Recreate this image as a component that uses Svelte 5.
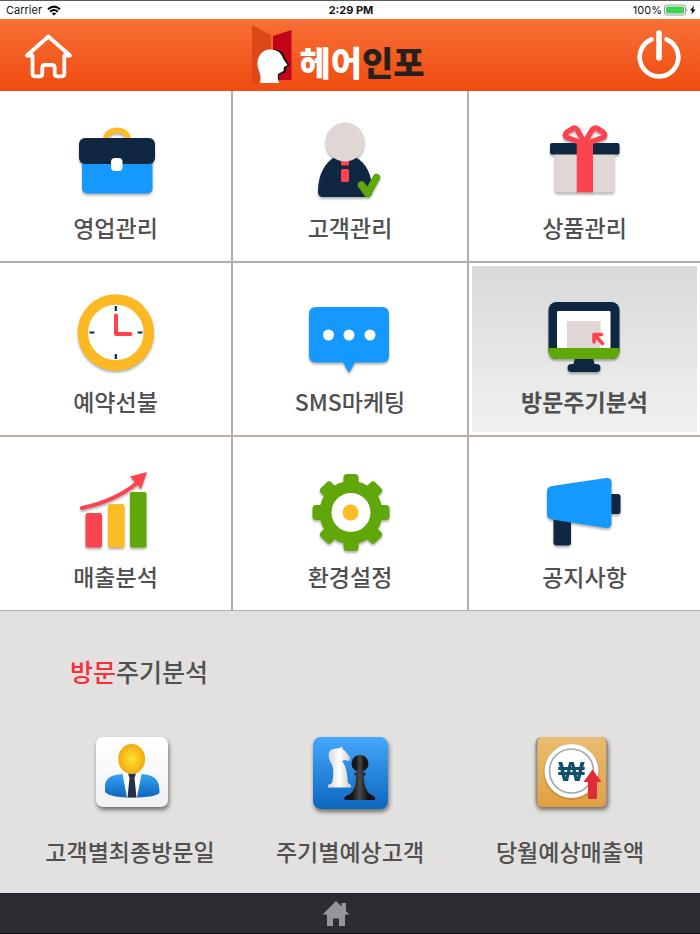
<script>
	let menus = [
		{ id: 'sales', label: '영업관리', box: '65 118 101 88' },
		{ id: 'customer', label: '고객관리', box: '300 118 101 88' },
		{ id: 'product', label: '상품관리', box: '534 118 101 88' },
		{ id: 'booking', label: '예약선불', box: '65 292 101 88' },
		{ id: 'sms', label: 'SMS마케팅', box: '300 292 101 88' },
		{ id: 'visit', label: '방문주기분석', box: '534 292 101 88' },
		{ id: 'revenue', label: '매출분석', box: '65 467 101 88' },
		{ id: 'settings', label: '환경설정', box: '300 467 101 88' },
		{ id: 'notice', label: '공지사항', box: '534 467 101 88' }
	];

	let subs = [
		{ id: 'last', label: '고객별최종방문일', box: '85 731 90 90' },
		{ id: 'cycle', label: '주기별예상고객', box: '305 731 90 90' },
		{ id: 'month', label: '당월예상매출액', box: '525 731 90 90' }
	];

	let selected = 'visit';
	const teeth = [0, 45, 90, 135, 180, 225, 270, 315];
</script>

<div class="page">
	<div class="status">
		<div class="carrier">
			<span>Carrier</span>
			<svg width="14" height="11" viewBox="0 0 14 11" fill="none" stroke="#000" stroke-width="2">
				<path d="M1 4.2Q7 -1 13 4.2M3.2 6.7Q7 3.4 10.8 6.7" />
				<path d="M7 10.6L4.8 8.4Q7 6.8 9.2 8.4Z" fill="#000" stroke="none" />
			</svg>
		</div>
		<b>2:29 PM</b>
		<div class="battery">
			<span>100%</span>
			<svg width="32" height="12" viewBox="0 0 32 12">
				<rect x="0.5" y="1" width="21" height="10" rx="2" fill="#fff" stroke="#999" />
				<rect x="2" y="2.5" width="18" height="7" rx="1" fill="#41d251" />
				<path d="M22.5 4.5Q24.5 6 22.5 7.5Z" fill="#999" />
				<path d="M30 1.5L26 6.5H28.2L27.4 10.5L31.5 5.5H29.2Z" fill="#000" />
			</svg>
		</div>
	</div>

	<header>
		<button class="icon-btn" aria-label="홈">
			<svg width="62" height="60" viewBox="12 25 62 60" fill="none" stroke="#fff" stroke-width="3.8" stroke-linejoin="round">
				<path d="M48.3 36.5L27 55.5H32.5V73.5Q32.5 76.3 35 76.3H39.5Q42.3 76.3 42.3 73.5V68Q42.3 65 45 65H52Q54.7 65 54.7 68V73.5Q54.7 76.3 57.3 76.3H61.5Q64.3 76.3 64.3 73.5V55.5H70Z" />
			</svg>
		</button>
		<div class="logo">
			<svg width="42" height="62" viewBox="251 24 42 62">
				<path d="M252 25L271 35V50L258 84L252 83Z" fill="#dc4817" />
				<path d="M273 36L291.5 30V80H273Z" fill="#c10519" />
				<path d="M273 49.5C281 50 284 53 285 58L289.5 65L286 68V72L279 75V81H274Z" fill="#160d0d" />
				<path d="M260 83C262 76 259 72 257.8 67C256 57 262 49.5 270 49.5C278 49.5 282 54 283 58.5L287.5 65L284 67L283.5 71L278 74Q277 78 279 83Z" fill="#fff" />
			</svg>
			<span class="brand">헤어<em>인포</em></span>
		</div>
		<button class="icon-btn" aria-label="종료">
			<svg width="62" height="60" viewBox="626 25 62 60" fill="none" stroke="#fff" stroke-width="4.6" stroke-linecap="round">
				<path d="M651.5 39.3A19.3 19.3 0 1 0 666.5 39.3" />
				<path d="M659 33V58" stroke-width="5.6" />
			</svg>
		</button>
	</header>

	<nav class="menu">
		{#each menus as menu}
			<button class="cell" class:active={menu.id === selected} on:click={() => (selected = menu.id)}>
				<svg class="icon" width="101" height="88" viewBox={menu.box}>
					{#if menu.id === 'sales'}
						<path d="M106 140C105 127 129 127 128 140" fill="none" stroke="#fdbb24" stroke-width="5.5" />
						<rect x="82" y="155" width="70.5" height="38.5" rx="5" fill="#1599fe" />
						<rect x="79" y="138" width="76" height="26" rx="6" fill="#0f2740" />
						<rect x="111" y="158" width="11.5" height="13" rx="4" fill="#fff" />
					{:else if menu.id === 'customer'}
						<path d="M318 191C318 175 325 162 335 157H355C366 162 372 175 372 190V192Q372 197 367 197H323Q318 197 318 192Z" fill="#0f2740" />
						<rect x="341" y="158" width="8" height="7.5" rx="1" fill="#fc4450" />
						<rect x="341" y="169" width="8" height="13" rx="1.5" fill="#fc4450" />
						<circle cx="345" cy="142" r="19.5" fill="#e0d7d5" />
						<path d="M361.5 185L367.7 193.5L376.5 177.5" fill="none" stroke="#60a80a" stroke-width="7.5" stroke-linecap="round" stroke-linejoin="round" />
					{:else if menu.id === 'product'}
						<rect x="554.5" y="150" width="60" height="42.5" rx="3" fill="#e0d7d5" />
						<rect x="550" y="143" width="69.5" height="11.5" rx="2" fill="#0f2740" />
						<path d="M576.7 192.5V143L585 138L593 143V192.5Z" fill="#fc4450" />
						<path d="M582 143L567 137.5Q563.5 135 567 132L572 129Q575 127 577.5 130L584.5 143L592 130Q594.5 127 598 129L603 132Q606.5 135 603 137.5L588 143" fill="none" stroke="#fc4450" stroke-width="5.5" stroke-linejoin="round" />
					{:else if menu.id === 'booking'}
						<circle cx="115.8" cy="332.5" r="33" fill="#fff" stroke="#fdb924" stroke-width="10.5" />
						<path d="M115.8 306V311M115.8 354V359M89.5 332.5H94.5M137.5 332.5H142.5" stroke="#0f2740" stroke-width="2.2" />
						<path d="M116 315.5V334H130.5" fill="none" stroke="#fc4450" stroke-width="4" stroke-linecap="round" stroke-linejoin="round" />
					{:else if menu.id === 'sms'}
						<path d="M316 307H382Q389 307 389 314V355.5Q389 362.5 382 362.5H355L350 371.5Q349 372.5 348 371.5L343 362.5H316Q309 362.5 309 355.5V314Q309 307 316 307Z" fill="#1599fe" />
						<circle cx="328.5" cy="335" r="5.5" fill="#fff" />
						<circle cx="349" cy="335" r="5.5" fill="#fff" />
						<circle cx="370" cy="335" r="5.5" fill="#fff" />
					{:else if menu.id === 'visit'}
						<path d="M575 358H593L595 366H573Z" fill="#0f2740" />
						<rect x="567.5" y="364" width="33" height="8" rx="4" fill="#0f2740" />
						<rect x="548.5" y="302" width="71" height="57" rx="8" fill="#0f2740" />
						<path d="M548.5 348H619.5V351Q619.5 359 611.5 359H556.5Q548.5 359 548.5 351Z" fill="#60a80a" />
						<rect x="557" y="311" width="53.5" height="37" rx="1" fill="#fff" />
						<rect x="567" y="321" width="33.7" height="27" fill="#e0d7d5" />
						<path d="M594 342V334.5H601.500M595 335.500L602.500 343.500" fill="none" stroke="#fc4450" stroke-width="3.6" stroke-linecap="round" stroke-linejoin="round" />
					{:else if menu.id === 'revenue'}
						<rect x="85.5" y="513" width="16.5" height="34.5" rx="2" fill="#fc4450" />
						<rect x="108" y="504" width="16.5" height="43.5" rx="2" fill="#fdbb24" />
						<rect x="130" y="492" width="16.5" height="55.5" rx="2" fill="#60a80a" />
						<path d="M82 508Q115 501 137 483" fill="none" stroke="#fc4450" stroke-width="4" stroke-linecap="round" />
						<path d="M147 472L130 476.5L141 489Z" fill="#fc4450" />
					{:else if menu.id === 'settings'}
						{#each teeth as angle}
							<rect x="343.5" y="474" width="15" height="14" rx="3.5" fill="#60a80a" transform="rotate({angle} 351 512.5)" />
						{/each}
						<circle cx="351" cy="512.5" r="25.5" fill="#fff" stroke="#60a80a" stroke-width="12" />
						<circle cx="350.5" cy="512.5" r="8" fill="#fdbb24" />
					{:else}
						<rect x="553.5" y="512" width="17.5" height="33.5" rx="3" fill="#0f2740" />
						<rect x="607" y="494" width="13.5" height="20" rx="2.5" fill="#0f2740" />
						<path d="M552 486L606 478Q611.5 477.5 611.5 482V523Q611.5 528.5 606 528L552 519.5Q547 518.5 547 514V491Q547 487 552 486Z" fill="#1599fe" />
					{/if}
				</svg>
				<span class="label">{menu.label}</span>
			</button>
		{/each}
	</nav>

	<section>
		<h2><em>방문</em>주기분석</h2>
		<div class="subs">
			{#each subs as sub}
				<button class="sub">
					<svg class="tile" width="90" height="90" viewBox={sub.box}>
						{#if sub.id === 'last'}
							<defs>
								<linearGradient id="paper" x2="0" y2="1"><stop stop-color="#fff" /><stop offset="1" stop-color="#f1f1f4" /></linearGradient>
								<linearGradient id="suit" x2="0" y2="1"><stop stop-color="#39a2f4" /><stop offset="1" stop-color="#0b67bd" /></linearGradient>
								<radialGradient id="face"><stop stop-color="#ffe32e" /><stop offset="1" stop-color="#f3ab10" /></radialGradient>
							</defs>
							<rect x="96" y="737" width="72" height="70" rx="7" fill="url(#paper)" />
							<path d="M105 790C104 778 110 775 123 774H141C153 775 160 778 159.5 793Q155 797.5 132 797.5Q110 797.5 105 792Z" fill="url(#suit)" />
							<path d="M122.5 774L127 797.5H137L141.5 774Z" fill="#fff" />
							<path d="M128 773.5H136L134.5 778L136.5 797.5H127.5L129.5 778Z" fill="#253148" />
							<ellipse cx="131.7" cy="759" rx="13.5" ry="15" fill="url(#face)" />
						{:else if sub.id === 'cycle'}
							<defs>
								<linearGradient id="board" x2="0" y2="1"><stop stop-color="#45a8fb" /><stop offset="1" stop-color="#0c66bf" /></linearGradient>
								<linearGradient id="knight"><stop stop-color="#d5d5d5" /><stop offset=".5" stop-color="#fff" /><stop offset="1" stop-color="#c9c9c9" /></linearGradient>
								<linearGradient id="pawn"><stop offset=".25" stop-color="#151515" /><stop offset=".5" stop-color="#494949" /><stop offset=".75" stop-color="#151515" /></linearGradient>
							</defs>
							<rect x="313" y="737" width="75" height="72" rx="8" fill="url(#board)" />
							<path d="M333 749L340 748L341.5 746.5L343 749.5C346 751 348 755 350.5 758L349 761L345 760L342 761C347 767 347 775 348 783L351 785V787.5H328V785L332 783C334 774 334 767 330.5 762C327.5 756 328 750 333 749Z" fill="url(#knight)" />
							<circle cx="360" cy="763.5" r="8.5" fill="url(#pawn)" />
							<path d="M357 770H363V772.5H365.5V775.5H364C364 785 366 791 370 794L375 797V800H344.5V797L350 794C354 791 356 785 356 775.5H354.5V772.5H357Z" fill="url(#pawn)" />
						{:else}
							<defs>
								<linearGradient id="gold" x2="0" y2="1"><stop stop-color="#e9bd73" /><stop offset="1" stop-color="#e0a042" /></linearGradient>
							</defs>
							<rect x="535.5" y="737" width="72" height="70" rx="6" fill="#96908a" />
							<rect x="537.5" y="737" width="68.5" height="70" rx="5" fill="url(#gold)" />
							<circle cx="571.5" cy="772" r="28" fill="#ad7a2d" opacity=".5" />
							<circle cx="571.5" cy="771" r="27" fill="#fff" />
							<circle cx="571.5" cy="771" r="22" fill="none" stroke="#a8a9ac" stroke-width="1.7" />
							<text class="won" x="571.5" y="781" text-anchor="middle">₩</text>
							<path d="M592.5 769.5L601.5 782H597V797.5Q597 799 595.5 799H589.5Q588 799 588 797.5V782H583.5Z" fill="#de2c38" />
						{/if}
					</svg>
					<span class="label">{sub.label}</span>
				</button>
			{/each}
		</div>
	</section>

	<footer>
		<button class="icon-btn" aria-label="메인으로">
			<svg width="28" height="28" viewBox="322 898 28 28" fill="#96969a">
				<path d="M336 899L341.5 904.5V901H346V909L349.5 912.5H345V924H339V916.5H333V924H327V912.5H322.5Z" />
			</svg>
		</button>
	</footer>
</div>

<style>
	:global(body) {
		background: #e2e1df;
	}

	.page {
		min-height: 100vh;
		display: flex;
		flex-direction: column;
		font-family: "Noto Sans CJK KR", "Noto Sans", sans-serif;
		color: #505050;
	}

	button {
		margin: 0;
		padding: 0;
		border: 0;
		background: none;
		font: inherit;
		color: inherit;
		cursor: pointer;
	}

	svg {
		display: block;
	}

	em {
		font-style: normal;
	}

	.status {
		display: grid;
		grid-template-columns: 1fr auto 1fr;
		align-items: center;
		box-sizing: border-box;
		height: 19px;
		padding: 0 4px 0 6px;
		border-top: 1px solid #5a5a5a;
		background: #fff;
		color: #111;
		font-family: Inter, "Liberation Sans", sans-serif;
		font-size: 11px;
	}

	.carrier, .battery {
		display: flex;
		align-items: center;
		gap: 5px;
	}

	.battery {
		justify-content: flex-end;
		gap: 2px;
	}

	header {
		display: flex;
		align-items: center;
		justify-content: space-between;
		height: 72px;
		padding: 0 12px;
		background: linear-gradient(#f87036, #ef4b10);
	}

	.logo {
		display: flex;
		align-items: center;
		gap: 6px;
		padding-right: 24px;
	}

	.brand {
		padding-top: 14px;
		font-size: 34px;
		line-height: 34px;
		font-weight: 900;
		color: #fff;
	}

	.brand em {
		color: #28201c;
	}

	.menu {
		display: grid;
		grid-template-columns: 77fr 78fr 77fr;
		grid-template-rows: minmax(170px, auto) minmax(172px, auto) minmax(173px, auto);
		gap: 2px;
		border-bottom: 1px solid #b8aea6;
		background: #b8aea6;
	}

	.cell {
		display: flex;
		flex-direction: column;
		align-items: center;
		justify-content: flex-end;
		gap: 6px;
		padding-bottom: 19px;
		background: #fff;
	}

	.cell.active {
		padding: 3px;
		background: linear-gradient(#d9d9d9, #f1f1f1) content-box, #fff;
	}

	.cell.active .label {
		padding-bottom: 16px;
		font-weight: 700;
	}

	.icon {
		filter: drop-shadow(0 2px 1px rgba(0, 0, 0, 0.3));
	}

	.tile {
		filter: drop-shadow(1px 3px 2px rgba(0, 0, 0, 0.5));
	}

	.label {
		font-size: 23px;
		line-height: 30px;
		font-weight: 500;
		white-space: nowrap;
	}

	section {
		flex: 1;
		padding: 43px 20px 27px;
		background: #e2e1df;
	}

	h2 {
		margin: 0 0 43px 50px;
		font-size: 25px;
		line-height: 34px;
		font-weight: 500;
	}

	h2 em {
		color: #fb2c3a;
	}

	.subs {
		display: grid;
		grid-template-columns: repeat(3, 1fr);
	}

	.sub {
		display: flex;
		flex-direction: column;
		align-items: center;
		gap: 15px;
	}

	.won {
		font-family: "Liberation Sans", sans-serif;
		font-size: 28px;
		font-weight: 700;
		fill: #10506e;
	}

	footer {
		display: flex;
		align-items: center;
		justify-content: center;
		box-sizing: border-box;
		height: 41px;
		padding-right: 28px;
		border-top: 1px solid #222327;
		border-bottom: 1px solid #0c0c0e;
		background: #2b2c31;
	}
</style>
